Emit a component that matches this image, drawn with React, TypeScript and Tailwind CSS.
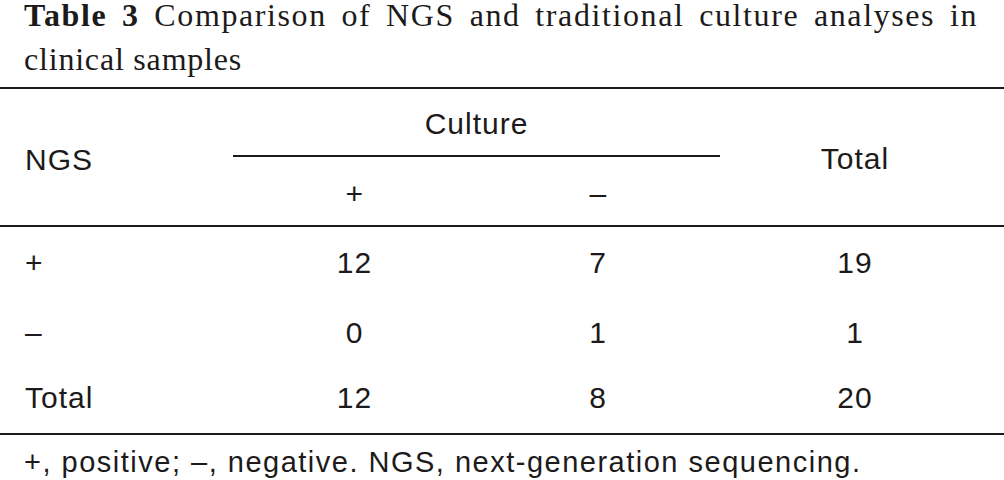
import React from "react";

export default function App() {
  const rows = [
    ["+", "12", "7", "19"],
    ["\u2013", "0", "1", "1"],
    ["Total", "12", "8", "20"],
  ];
  return (
    <div className="w-[1004px] h-[480px] bg-white text-[#1c1a1a] overflow-hidden">
      <div
        className="pl-[24px] pr-[26px] text-[32px] h-[87px]"
        style={{ fontFamily: '"Liberation Serif", serif' }}
      >
        <div className="leading-[30px] text-justify [text-align-last:justify] tracking-[1.6px]">
          <span className="font-bold">Table 3</span> Comparison of NGS and traditional culture analyses in
        </div>
        <div className="mt-[7px] leading-[44px] tracking-[0.8px]">clinical samples</div>
      </div>
      <div className="border-t-[2px] border-[#1c1a1a]" />
      <div style={{ fontFamily: '"Liberation Sans", Arial, sans-serif' }} className="text-[30px] tracking-[1px]">
        <div className="grid grid-cols-[233px_487px_1fr] h-[136px]">
          <div className="flex items-center pl-[25px] pt-[4px]">NGS</div>
          <div className="flex flex-col">
            <div className="h-[66px] flex items-center justify-center pt-[2px]">Culture</div>
            <div className="border-t-[2px] border-[#1c1a1a]" />
            <div className="flex-1 grid grid-cols-2">
              <div className="flex items-center justify-center pt-[4px]">+</div>
              <div className="flex items-center justify-center pt-[4px]">{"\u2013"}</div>
            </div>
          </div>
          <div className="flex items-center justify-center pr-[14px] pt-[2px]">Total</div>
        </div>
        <div className="border-t-[2px] border-[#1c1a1a]" />
        <div>
          <div className="grid grid-cols-[233px_243px_244px_1fr] h-[70px]">
            <div className="flex items-center pl-[25px]">{rows[0][0]}</div>
            <div className="flex items-center justify-center">{rows[0][1]}</div>
            <div className="flex items-center justify-center">{rows[0][2]}</div>
            <div className="flex items-center justify-center pr-[14px]">{rows[0][3]}</div>
          </div>
          <div className="grid grid-cols-[233px_243px_244px_1fr] h-[70px]">
            <div className="flex items-center pl-[25px]">{rows[1][0]}</div>
            <div className="flex items-center justify-center">{rows[1][1]}</div>
            <div className="flex items-center justify-center">{rows[1][2]}</div>
            <div className="flex items-center justify-center pr-[14px]">{rows[1][3]}</div>
          </div>
          <div className="grid grid-cols-[233px_243px_244px_1fr] h-[66px] pb-[6px]">
            <div className="flex items-center pl-[25px]">{rows[2][0]}</div>
            <div className="flex items-center justify-center">{rows[2][1]}</div>
            <div className="flex items-center justify-center">{rows[2][2]}</div>
            <div className="flex items-center justify-center pr-[14px]">{rows[2][3]}</div>
          </div>
        </div>
        <div className="border-t-[2px] border-[#1c1a1a]" />
        <div className="pl-[24px] h-[46px] pt-[10px] flex items-center text-[29px] tracking-[1.5px] whitespace-nowrap">
          +, positive; {"\u2013"}, negative. NGS, next-generation sequencing.
        </div>
      </div>
    </div>
  );
}
